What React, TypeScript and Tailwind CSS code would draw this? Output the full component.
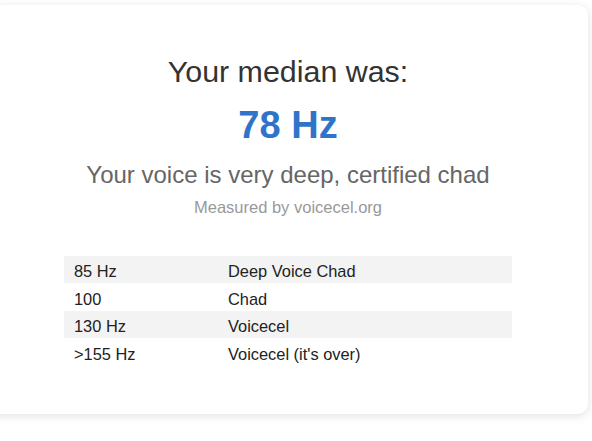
import React from 'react';

const rows = [
  { freq: '85 Hz', label: 'Deep Voice Chad' },
  { freq: '100', label: 'Chad' },
  { freq: '130 Hz', label: 'Voicecel' },
  { freq: '>155 Hz', label: "Voicecel (it's over)" },
];

const App: React.FC = () => {
  return (
    <div className="w-[592px] h-[441px] bg-white overflow-hidden font-['Liberation_Sans',Arial,sans-serif]">
      {/* result card */}
      <div className="mt-[5px] -ml-[12px] w-[600px] h-[409px] bg-white rounded-[10px] shadow-[0_2px_10px_rgba(0,0,0,0.12)] pt-[48px] flex flex-col items-center">
        <h2 className="text-[30.4px] leading-[36px] text-[#333]">Your median was:</h2>
        <div className="mt-[14px] text-[38px] leading-[44px] font-bold text-[#2f74c9]">78 Hz</div>
        <p className="mt-[14px] text-[24px] leading-[28px] text-[#666]">Your voice is very deep, certified chad</p>
        <p className="mt-[8px] text-[16.5px] leading-[20px] text-[#999]">Measured by voicecel.org</p>

        <div className="mt-[38.6px] w-[448px] flex flex-col text-[16.4px] text-[#222]">
          {rows.map((row, i) => (
            <div
              key={row.freq}
              className={`h-[27.5px] pt-[3.5px] flex ${i % 2 === 0 ? 'bg-[#f3f3f3]' : 'bg-white'}`}
            >
              <span className="w-[164px] pl-[10px]">{row.freq}</span>
              <span>{row.label}</span>
            </div>
          ))}
        </div>
      </div>
    </div>
  );
};

export default App;
